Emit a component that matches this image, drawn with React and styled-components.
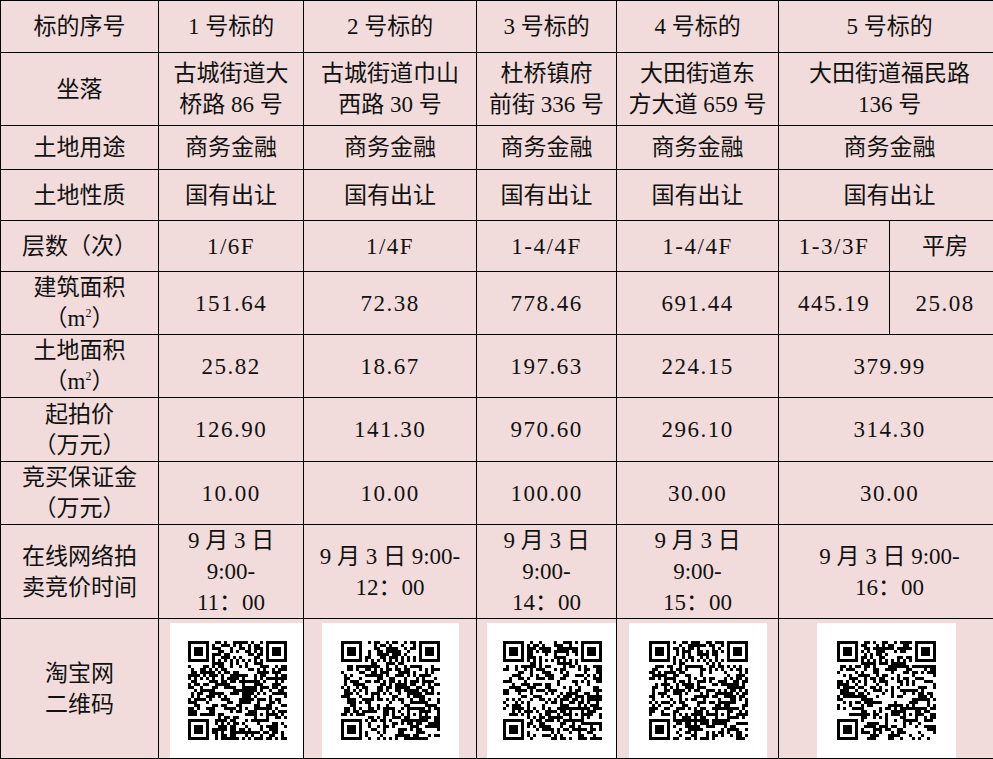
// # IMPORTS
import React from 'react';
import styled, { createGlobalStyle } from 'styled-components';

// # CONSTANTS
const colors = {
    pink: '#f2dcdb',
    line: '#000000',
    text: '#111111',
    white: '#ffffff'
};
const COLS = [158, 145, 173, 140, 162, 111, 111];

// # STYLED
const GlobalStyle = createGlobalStyle`
    html, body {
        margin: 0;
        padding: 0;
        background: ${colors.white};
        overflow: hidden;
    }
`;
const Table = styled.table`
    border-collapse: collapse;
    table-layout: fixed;
    width: 1000px;
    background: ${colors.pink};
    font-family: "Liberation Serif", "Noto Sans CJK SC", serif;
    font-size: 23px;
    color: ${colors.text};
`;
const Row = styled.tr`
    height: ${props => props.$h}px;
`;
const Cell = styled.td`
    border: 1px solid ${colors.line};
    padding: 0 2px;
    text-align: center;
    vertical-align: middle;
    line-height: 31px;
    white-space: nowrap;
    letter-spacing: ${props => props.$num ? '1.5px' : '0'};
`;
const Sup = styled.sup`
    font-size: 12px;
    line-height: 0;
    vertical-align: 9px;
`;
const QrCell = styled.td`
    border: 1px solid ${colors.line};
    padding: 4px 0 0 0;
    vertical-align: bottom;
`;
const QrBox = styled.div`
    width: ${props => props.$w}px;
    height: 135px;
    margin-left: ${props => props.$ml}px;
    background: ${colors.white};
    display: flex;
    align-items: center;
    justify-content: center;
`;

// # QR DRAWING
function rng(seed){
    let a = seed;
    return function(){
        a |= 0; a = a + 0x6D2B79F5 | 0;
        let t = Math.imul(a ^ a >>> 15, 1 | a);
        t = t + Math.imul(t ^ t >>> 7, 61 | t) ^ t;
        return ((t ^ t >>> 14) >>> 0) / 4294967296;
    };
}
function buildQr(seed){
    const n = 33;
    const rand = rng(seed);
    const grid = [];
    for(let y = 0; y < n; y++){
        grid.push([]);
        for(let x = 0; x < n; x++){
            grid[y].push(rand() < 0.5);
        }
    }
    const finder = (ox, oy) => {
        for(let y = -1; y < 8; y++){
            for(let x = -1; x < 8; x++){
                const gx = ox + x, gy = oy + y;
                if(gx < 0 || gy < 0 || gx >= n || gy >= n) continue;
                const inside = x >= 0 && x <= 6 && y >= 0 && y <= 6;
                const ring = x === 0 || x === 6 || y === 0 || y === 6;
                const core = x >= 2 && x <= 4 && y >= 2 && y <= 4;
                grid[gy][gx] = inside && (ring || core);
            }
        }
    };
    finder(0, 0);
    finder(n - 7, 0);
    finder(0, n - 7);
    for(let i = 8; i < n - 8; i++){
        grid[6][i] = i % 2 === 0;
        grid[i][6] = i % 2 === 0;
    }
    for(let y = -2; y <= 2; y++){
        for(let x = -2; x <= 2; x++){
            const m = Math.max(Math.abs(x), Math.abs(y));
            grid[24 + y][24 + x] = m !== 1;
        }
    }
    let d = '';
    for(let y = 0; y < n; y++){
        for(let x = 0; x < n; x++){
            if(grid[y][x]) d += `M${x} ${y}h1v1h-1z`;
        }
    }
    return d;
}
function QrCode({seed}){
    return (
        <svg width="99" height="99" viewBox="0 0 33 33" shapeRendering="crispEdges">
            <path d={buildQr(seed)} fill="#000" />
        </svg>
    );
}

// # COMPONENT
export default function App(){
    return (
        <>
            <GlobalStyle />
            <Table>
                <colgroup>
                    {COLS.map((w, i) => <col key={i} style={{width: w}} />)}
                </colgroup>
                <tbody>
                    <Row $h={52}>
                        <Cell>标的序号</Cell>
                        <Cell>1 号标的</Cell>
                        <Cell>2 号标的</Cell>
                        <Cell>3 号标的</Cell>
                        <Cell>4 号标的</Cell>
                        <Cell colSpan={2}>5 号标的</Cell>
                    </Row>
                    <Row $h={73}>
                        <Cell>坐落</Cell>
                        <Cell>古城街道大<br />桥路 86 号</Cell>
                        <Cell>古城街道巾山<br />西路 30 号</Cell>
                        <Cell>杜桥镇府<br />前街 336 号</Cell>
                        <Cell>大田街道东<br />方大道 659 号</Cell>
                        <Cell colSpan={2}>大田街道福民路<br />136 号</Cell>
                    </Row>
                    <Row $h={44}>
                        <Cell>土地用途</Cell>
                        <Cell>商务金融</Cell>
                        <Cell>商务金融</Cell>
                        <Cell>商务金融</Cell>
                        <Cell>商务金融</Cell>
                        <Cell colSpan={2}>商务金融</Cell>
                    </Row>
                    <Row $h={51}>
                        <Cell>土地性质</Cell>
                        <Cell>国有出让</Cell>
                        <Cell>国有出让</Cell>
                        <Cell>国有出让</Cell>
                        <Cell>国有出让</Cell>
                        <Cell colSpan={2}>国有出让</Cell>
                    </Row>
                    <Row $h={51}>
                        <Cell>层数（次）</Cell>
                        <Cell $num>1/6F</Cell>
                        <Cell $num>1/4F</Cell>
                        <Cell $num>1-4/4F</Cell>
                        <Cell $num>1-4/4F</Cell>
                        <Cell $num>1-3/3F</Cell>
                        <Cell>平房</Cell>
                    </Row>
                    <Row $h={63}>
                        <Cell>建筑面积<br />（m<Sup>2</Sup>）</Cell>
                        <Cell $num>151.64</Cell>
                        <Cell $num>72.38</Cell>
                        <Cell $num>778.46</Cell>
                        <Cell $num>691.44</Cell>
                        <Cell $num>445.19</Cell>
                        <Cell $num>25.08</Cell>
                    </Row>
                    <Row $h={63}>
                        <Cell>土地面积<br />（m<Sup>2</Sup>）</Cell>
                        <Cell $num>25.82</Cell>
                        <Cell $num>18.67</Cell>
                        <Cell $num>197.63</Cell>
                        <Cell $num>224.15</Cell>
                        <Cell $num colSpan={2}>379.99</Cell>
                    </Row>
                    <Row $h={64}>
                        <Cell>起拍价<br />（万元）</Cell>
                        <Cell $num>126.90</Cell>
                        <Cell $num>141.30</Cell>
                        <Cell $num>970.60</Cell>
                        <Cell $num>296.10</Cell>
                        <Cell $num colSpan={2}>314.30</Cell>
                    </Row>
                    <Row $h={63}>
                        <Cell>竞买保证金<br />（万元）</Cell>
                        <Cell $num>10.00</Cell>
                        <Cell $num>10.00</Cell>
                        <Cell $num>100.00</Cell>
                        <Cell $num>30.00</Cell>
                        <Cell $num colSpan={2}>30.00</Cell>
                    </Row>
                    <Row $h={94}>
                        <Cell>在线网络拍<br />卖竞价时间</Cell>
                        <Cell>9 月 3 日<br />9:00-<br />11：00</Cell>
                        <Cell>9 月 3 日 9:00-<br />12：00</Cell>
                        <Cell>9 月 3 日<br />9:00-<br />14：00</Cell>
                        <Cell>9 月 3 日<br />9:00-<br />15：00</Cell>
                        <Cell colSpan={2}>9 月 3 日 9:00-<br />16：00</Cell>
                    </Row>
                    <Row $h={139}>
                        <Cell>淘宝网<br />二维码</Cell>
                        <QrCell><QrBox $w={134} $ml={11}><QrCode seed={11} /></QrBox></QrCell>
                        <QrCell><QrBox $w={137} $ml={18}><QrCode seed={23} /></QrBox></QrCell>
                        <QrCell><QrBox $w={130} $ml={10}><QrCode seed={37} /></QrBox></QrCell>
                        <QrCell><QrBox $w={138} $ml={12}><QrCode seed={41} /></QrBox></QrCell>
                        <QrCell colSpan={2}><QrBox $w={139} $ml={38}><QrCode seed={59} /></QrBox></QrCell>
                    </Row>
                </tbody>
            </Table>
        </>
    );
}
